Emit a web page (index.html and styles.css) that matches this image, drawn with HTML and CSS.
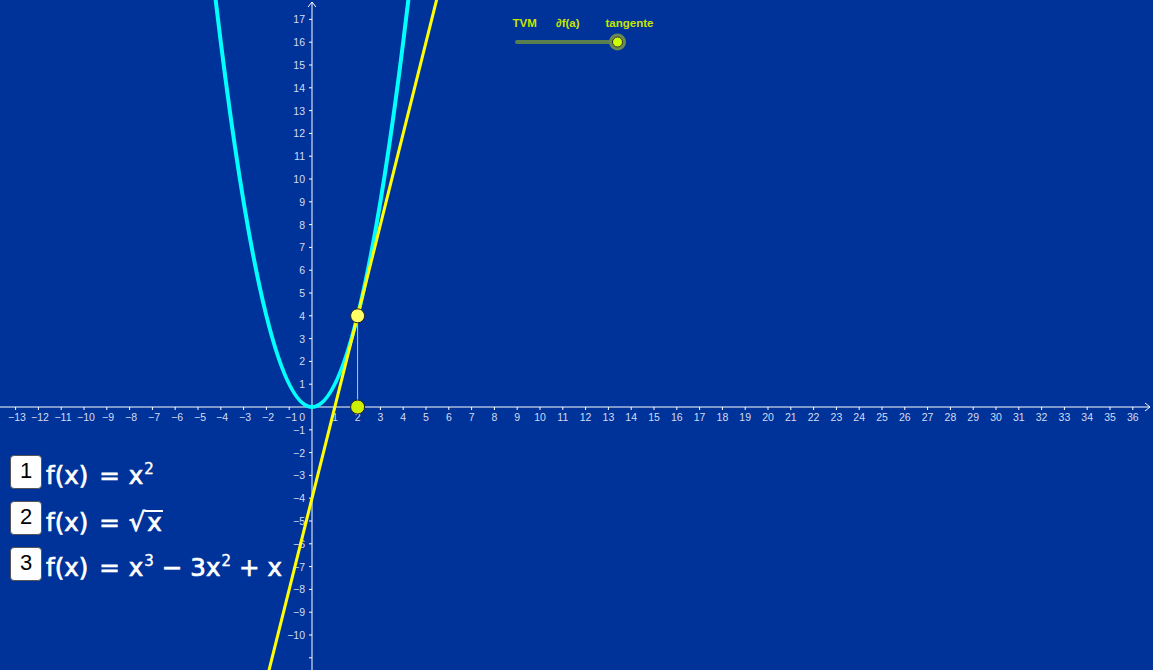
FILE: index.html
```html
<!DOCTYPE html>
<html lang="pt">
<head>
<meta charset="utf-8">
<title>Derivada</title>
<link rel="stylesheet" href="styles.css">
</head>
<body>
<div class="app">
  <svg class="graph" width="1153" height="670" viewBox="0 0 1153 670" xmlns="http://www.w3.org/2000/svg">
    <g class="axes">
      <line x1="0" y1="407" x2="1150" y2="407"/>
      <polyline points="1145,403 1150,407 1145,411" fill="none"/>
      <line x1="312" y1="670" x2="312" y2="2"/>
      <polyline points="308,7 312,2 316,7" fill="none"/>
    </g>
    <g class="ticks">
      <path d="M15.6 407v3M38.4 407v3M61.2 407v3M84 407v3M106.8 407v3M129.6 407v3M152.4 407v3M175.2 407v3M198 407v3M220.8 407v3M243.6 407v3M266.4 407v3M289.2 407v3M334.8 407v3M357.6 407v3M380.4 407v3M403.2 407v3M426 407v3M448.8 407v3M471.6 407v3M494.4 407v3M517.2 407v3M540 407v3M562.8 407v3M585.6 407v3M608.4 407v3M631.2 407v3M654 407v3M676.8 407v3M699.6 407v3M722.4 407v3M745.2 407v3M768 407v3M790.8 407v3M813.6 407v3M836.4 407v3M859.2 407v3M882 407v3M904.8 407v3M927.6 407v3M950.4 407v3M973.2 407v3M996 407v3M1018.8 407v3M1041.6 407v3M1064.4 407v3M1087.2 407v3M1110 407v3M1132.8 407v3"/>
      <path d="M312 19.4h-3M312 42.2h-3M312 65h-3M312 87.8h-3M312 110.6h-3M312 133.4h-3M312 156.2h-3M312 179h-3M312 201.8h-3M312 224.6h-3M312 247.4h-3M312 270.2h-3M312 293h-3M312 315.8h-3M312 338.6h-3M312 361.4h-3M312 384.2h-3M312 429.8h-3M312 452.6h-3M312 475.4h-3M312 498.2h-3M312 521h-3M312 543.8h-3M312 566.6h-3M312 589.4h-3M312 612.2h-3M312 635h-3M312 657.8h-3"/>
    </g>
    <g class="xlabels">
      <text x="17" y="421">−13</text><text x="40" y="421">−12</text><text x="63" y="421">−11</text><text x="86" y="421">−10</text>
      <text x="108" y="421">−9</text><text x="131" y="421">−8</text><text x="154" y="421">−7</text><text x="177" y="421">−6</text>
      <text x="200" y="421">−5</text><text x="222" y="421">−4</text><text x="245" y="421">−3</text><text x="268" y="421">−2</text>
      <text x="291" y="421">−1</text>
      <text x="334.8" y="421">1</text><text x="357.6" y="421">2</text><text x="380.4" y="421">3</text><text x="403.2" y="421">4</text>
      <text x="426" y="421">5</text><text x="448.8" y="421">6</text><text x="471.6" y="421">7</text><text x="494.4" y="421">8</text>
      <text x="517.2" y="421">9</text><text x="540" y="421">10</text><text x="562.8" y="421">11</text><text x="585.6" y="421">12</text>
      <text x="608.4" y="421">13</text><text x="631.2" y="421">14</text><text x="654" y="421">15</text><text x="676.8" y="421">16</text>
      <text x="699.6" y="421">17</text><text x="722.4" y="421">18</text><text x="745.2" y="421">19</text><text x="768" y="421">20</text>
      <text x="790.8" y="421">21</text><text x="813.6" y="421">22</text><text x="836.4" y="421">23</text><text x="859.2" y="421">24</text>
      <text x="882" y="421">25</text><text x="904.8" y="421">26</text><text x="927.6" y="421">27</text><text x="950.4" y="421">28</text>
      <text x="973.2" y="421">29</text><text x="996" y="421">30</text><text x="1018.8" y="421">31</text><text x="1041.6" y="421">32</text>
      <text x="1064.4" y="421">33</text><text x="1087.2" y="421">34</text><text x="1110" y="421">35</text><text x="1132.8" y="421">36</text>
    </g>
    <g class="ylabels">
      <text x="305" y="421">0</text>
      <text x="305" y="23.4">17</text><text x="305" y="46.2">16</text><text x="305" y="69">15</text><text x="305" y="91.8">14</text>
      <text x="305" y="114.6">13</text><text x="305" y="137.4">12</text><text x="305" y="160.2">11</text><text x="305" y="183">10</text>
      <text x="305" y="205.8">9</text><text x="305" y="228.6">8</text><text x="305" y="251.4">7</text><text x="305" y="274.2">6</text>
      <text x="305" y="297">5</text><text x="305" y="319.8">4</text><text x="305" y="342.6">3</text><text x="305" y="365.4">2</text>
      <text x="305" y="388.2">1</text>
      <text x="305" y="433.8">−1</text><text x="305" y="456.6">−2</text><text x="305" y="479.4">−3</text><text x="305" y="502.2">−4</text>
      <text x="305" y="525">−5</text><text x="305" y="547.8">−6</text><text x="305" y="570.6">−7</text><text x="305" y="593.4">−8</text>
      <text x="305" y="616.2">−9</text><text x="305" y="639">−10</text>
    </g>
    <path class="curve" d="M213.96,-14.57 Q312,828.57 410.04,-14.57"/>
    <line class="tangent" x1="266.4" y1="680.6" x2="439.68" y2="-12.52"/>
    <line class="segment" x1="357.6" y1="315.8" x2="357.6" y2="407"/>
    <circle class="pt-a" cx="357.6" cy="315.8" r="7"/>
    <circle class="pt-b" cx="357.6" cy="407" r="7"/>
    <g class="slider">
      <text x="512.5" y="26.5">TVM</text>
      <text x="556" y="26.5">∂f(a)</text>
      <text x="605.5" y="26.5">tangente</text>
      <line class="track" x1="517" y1="42" x2="617" y2="42"/>
      <circle class="halo" cx="617.5" cy="42" r="8.5"/>
      <circle class="knob" cx="617.5" cy="42" r="5"/>
    </g>
  </svg>

  <div class="funcs">
    <div class="func">
      <span class="key">1</span>
      <span class="formula">f(x)<span class="rel">=</span>x<sup>2</sup></span>
    </div>
    <div class="func">
      <span class="key">2</span>
      <span class="formula">f(x)<span class="rel">=</span><span class="root"><span class="radical">√</span><span class="radicand">x</span></span></span>
    </div>
    <div class="func">
      <span class="key">3</span>
      <span class="formula">f(x)<span class="rel">=</span>x<sup>3</sup><span class="bin">−</span>3x<sup>2</sup><span class="bin">+</span>x</span>
    </div>
  </div>
</div>
</body>
</html>
```

FILE: styles.css
```css
html, body {
  margin: 0;
  padding: 0;
  background: #003399;
  overflow: hidden;
}

.app {
  position: relative;
  width: 1153px;
  height: 670px;
  background: #003399;
  overflow: hidden;
  font-family: "Liberation Sans", Arial, sans-serif;
}

.graph {
  display: block;
}

.axes line,
.axes polyline {
  stroke: #ffffff;
  stroke-width: 1;
}

.ticks path {
  stroke: #ffffff;
  stroke-width: 1;
  fill: none;
}

.xlabels text,
.ylabels text {
  font-family: "Liberation Sans", Arial, sans-serif;
  font-size: 10.5px;
  fill: #d4dcf2;
}

.xlabels text {
  text-anchor: middle;
}

.ylabels text {
  text-anchor: end;
}

.curve {
  fill: none;
  stroke: #00ffff;
  stroke-width: 4;
}

.tangent {
  stroke: #ffff00;
  stroke-width: 3;
}

.segment {
  stroke: #c8c8c8;
  stroke-width: 1;
}

.pt-a {
  fill: #ffff66;
  stroke: #222222;
  stroke-width: 1;
}

.pt-b {
  fill: #ccf000;
  stroke: #222222;
  stroke-width: 1;
}

.slider text {
  font-family: "Liberation Sans", Arial, sans-serif;
  font-weight: bold;
  font-size: 11.5px;
  fill: #c8e400;
}

.track {
  stroke: #5a7f4e;
  stroke-width: 4;
  stroke-linecap: round;
}

.halo {
  fill: #6b8a52;
  stroke: none;
}

.knob {
  fill: #ccff00;
  stroke: #333333;
  stroke-width: 1;
}

.funcs {
  position: absolute;
  left: 10px;
  top: 455px;
  display: flex;
  flex-direction: column;
  gap: 12px;
}

.func {
  display: flex;
  align-items: flex-start;
  gap: 4px;
  height: 34px;
}

.key {
  box-sizing: border-box;
  flex: none;
  width: 32px;
  height: 34px;
  background: #ffffff;
  border: 1px solid #555555;
  border-radius: 4px;
  color: #000000;
  font-family: "Liberation Sans", Arial, sans-serif;
  font-size: 22px;
  line-height: 29px;
  text-align: center;
}

.formula {
  color: #ffffff;
  font-family: "DejaVu Sans", sans-serif;
  font-size: 24.5px;
  line-height: 34px;
  padding-top: 4px;
  white-space: nowrap;
  -webkit-text-stroke: 0.7px #ffffff;
  display: flex;
  align-items: baseline;
}

.rel {
  margin: 0 9px 0 11px;
}

.bin {
  margin: 0 8px;
}

.formula sup {
  font-size: 15px;
  line-height: 0;
  position: relative;
  top: -10px;
  margin-left: 1px;
  -webkit-text-stroke: 0.4px #ffffff;
}

.root {
  display: inline-flex;
  align-items: baseline;
}

.radical {
  font-size: 26px;
}

.radicand {
  border-top: 2px solid #ffffff;
  line-height: 22px;
  padding: 0 1px 0 2px;
}
```
